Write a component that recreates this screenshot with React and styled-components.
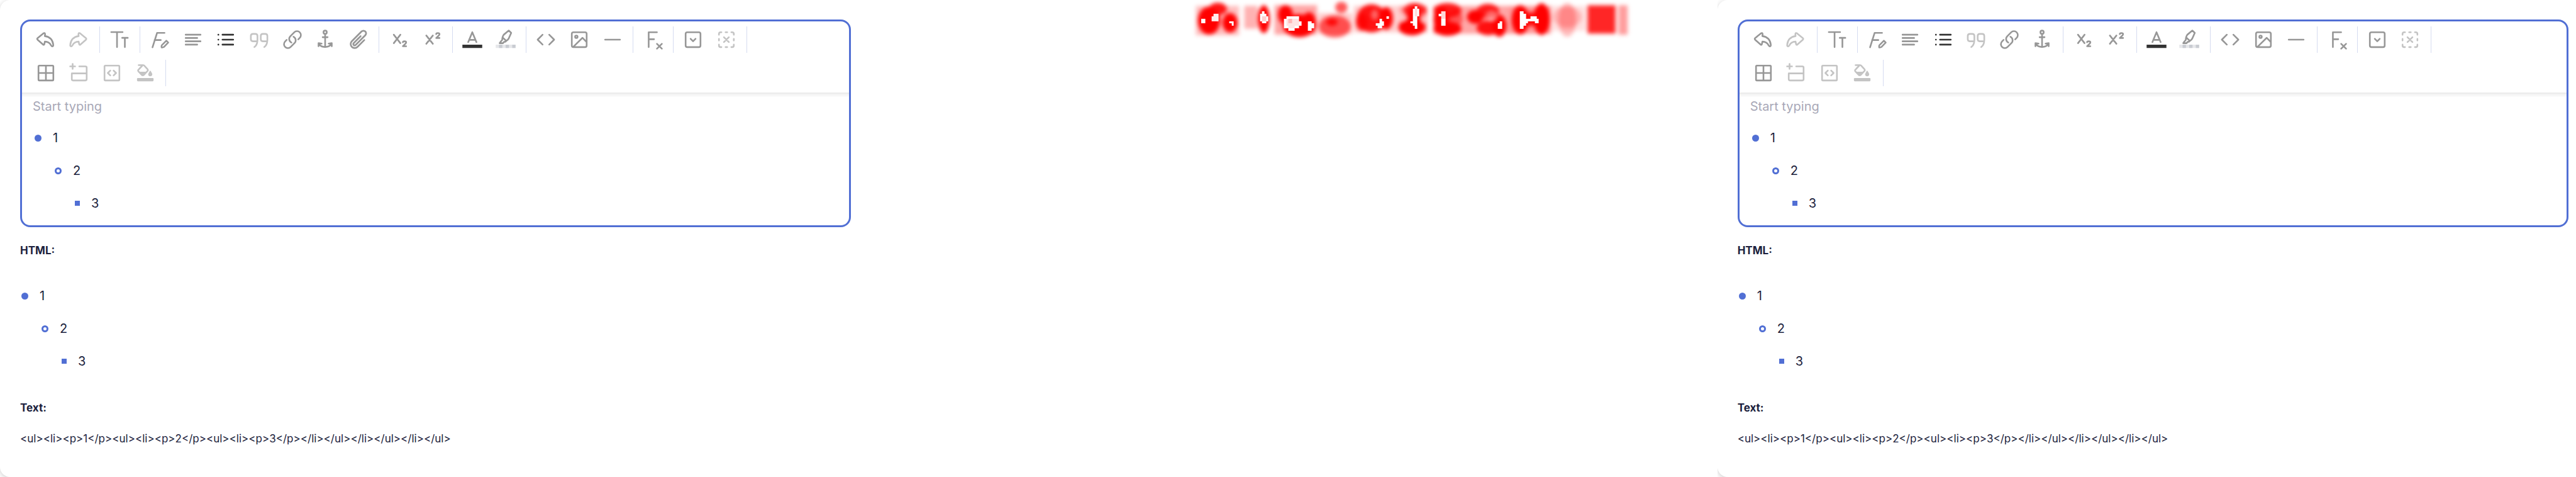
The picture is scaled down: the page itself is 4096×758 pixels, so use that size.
import React from "react";
import styled, { createGlobalStyle, css } from "styled-components";

const GlobalStyle = createGlobalStyle`
  *, *::before, *::after { box-sizing: border-box; }
  body {
    margin: 0;
    background: #fff;
    color: #1b1e3c;
    font-family: Inter, "Open Sans", sans-serif;
  }
`;

const Page = styled.main`
  display: grid;
  grid-template-columns: repeat(3, minmax(0, 1fr));
  min-height: 100vh;
`;

const Frame = styled.section`
  display: flex;
  min-width: 0;
  overflow: hidden;
`;

const Card = styled.div`
  flex: 1;
  min-width: 0;
  padding: 31px 12px 32px 32px;
  background: #fff;
  border-radius: 16px 0 0 16px;
  box-shadow: 0 2px 8px rgba(0, 0, 0, 0.2);
`;

const DiffFrame = styled(Frame)`
  justify-content: flex-end;
  align-items: flex-start;
  padding-right: 128px;
`;

const EditorBox = styled.div`
  border: 3px solid #516fd4;
  border-radius: 16px;
  overflow: hidden;
`;

const Toolbar = styled.div`
  display: flex;
  flex-direction: column;
  gap: 11px;
  padding: 8px 12px 10px;
  box-shadow: 0 2px 0 #ebebeb, 0 3px 4px 2px rgba(0, 0, 0, 0.06);
`;

const ToolRow = styled.div`
  display: flex;
`;

const groupWidths = { 1: 52, 2: 105, 3: 158, 4: 210, 6: 315, 7: 368 };

const ToolGroup = styled.div`
  display: flex;
  width: ${(p) => groupWidths[p.$count]}px;
`;

const Divider = styled.div`
  width: 1px;
  height: 42px;
  margin: 0 5px 0 6px;
  background: #d5dbf0;
`;

const tones = { normal: "#979797", muted: "#c4c4c4", active: "#333333" };

const ToolButton = styled.button`
  display: flex;
  flex: 1 1 0;
  justify-content: center;
  align-items: center;
  min-width: 0;
  height: 42px;
  padding: 0;
  border: 0;
  background: none;
  color: ${(p) => tones[p.$tone]};
`;

const Glyph = styled.svg`
  flex: none;
  width: 42px;
  height: 42px;
  overflow: visible;
  fill: none;
  stroke: currentColor;
  stroke-width: 4;
  stroke-linecap: round;
  stroke-linejoin: round;
`;

const EditArea = styled.div`
  padding: 7px 17px 9px;
  outline: none;
`;

const Placeholder = styled.p`
  margin: 0 0 9px;
  color: #a8a8b7;
  font-size: 20px;
  line-height: 30px;
`;

const List = styled.ul`
  margin: 0;
  padding: 0 0 0 ${(p) => p.$indent}px;
  list-style: none;
`;

const ItemLine = styled.div`
  display: flex;
  align-items: center;
  gap: 18px;
  font-size: 20px;
  line-height: 52px;
`;

const ItemText = styled.p`
  margin: 0;
`;

const markerShapes = {
  disc: css`
    width: 11px;
    height: 11px;
    border-radius: 50%;
    background: #516fd4;
  `,
  circle: css`
    width: 11px;
    height: 11px;
    border: 3px solid #516fd4;
    border-radius: 50%;
  `,
  square: css`
    width: 8px;
    height: 8px;
    background: #516fd4;
  `,
};

const Marker = styled.span`
  flex: none;
  ${(p) => markerShapes[p.$shape]}
`;

const Label = styled.h2`
  margin: ${(p) => p.$before}px 0 ${(p) => p.$after}px;
  font-size: 17px;
  font-weight: 700;
  line-height: 24px;
`;

const Markup = styled.p`
  margin: 0;
  font-size: 17px;
  line-height: 24px;
`;

const DiffDrawing = styled.svg`
  flex: none;
  width: 723px;
  height: 72px;
`;

const undoPath =
  "M-6.5 -15L-20 -3.8Q-22.3 -1.8 -20 0.3L-7 11.8Q-4 13.5 -3.6 10L-2.6 4.8Q8 5 12.3 13.5Q14.5 17 16.3 16.2Q18.2 15.5 17.7 12Q15.5 -6 -2.6 -8.5L-2 -13Q-2.5 -17.8 -6.5 -15Z";

const icons = {
  undo: <path d={undoPath} />,
  redo: <path transform="translate(-4 0) scale(-1 1)" d={undoPath} />,
  size: <path d="M-20 -18.3H7.5M-6 -18.3V18M6.5 -4.3H20M13 -4.3V18" />,
  format: (
    <path d="M-17.5 18.5L-6.5 -16.3H11.5M-12.5 1H2.5M16 2.5L20.5 7L9.8 18Q8.5 19 4.5 18.8Q4 14.5 5 13.5Z" />
  ),
  align: <path d="M-18 -12H18M-18 -4H10M-18 4H18M-18 12H10" />,
  list: <path d="M-18 -12H-17.9M-18 0H-17.9M-18 12H-17.9M-8 -12H18M-8 0H18M-8 12H18" />,
  quote: (
    <path d="M-4 2V-9Q-4 -14 -9 -14H-15Q-20 -14 -20 -9V-1Q-20 4 -15 4H-4.2Q-5 13 -11.5 18M20 2V-9Q20 -14 15 -14H9Q4 -14 4 -9V-1Q4 4 9 4H19.8Q19 13 12.5 18" />
  ),
  link: (
    <path
      transform="scale(2.1) translate(-12 -12)"
      strokeWidth="1.9"
      d="M13.19 8.688a4.5 4.5 0 0 1 1.242 7.244l-4.5 4.5a4.5 4.5 0 0 1-6.364-6.364l1.757-1.757m13.35-.622 1.757-1.757a4.5 4.5 0 0 0-6.364-6.364l-4.5 4.5a4.5 4.5 0 0 0 1.242 7.244"
    />
  ),
  anchor: (
    <path d="M0 -22A4 4 0 1 1 0 -14A4 4 0 1 1 0 -22M0 -13V18M-6 -6H6M-16 16V8.5L-8.5 9.5M16 16V8.5L8.5 9.5M-14.5 10C-10 20.5 10 20.5 14.5 10" />
  ),
  clip: (
    <path
      transform="scale(2.15) translate(-11.8 -12.3)"
      strokeWidth="1.9"
      d="m18.375 12.739-7.693 7.693a4.5 4.5 0 0 1-6.364-6.364l10.94-10.94A3 3 0 1 1 19.5 7.372L8.552 18.32m.009-.01-.01.01m5.699-9.941-7.81 7.81a1.5 1.5 0 0 0 2.112 2.13"
    />
  ),
  subscript: <path d="M-12 -12L4 8.5M4 -12L-12 8.5M10 6.5Q10 4 14 4Q18 4 18 7Q18 9 10 16H18" />,
  superscript: (
    <path d="M-14 -10L2 10M2 -10L-14 10M10 -13.5Q10 -16 14 -16Q18 -16 18 -13Q18 -11 10 -4H18" />
  ),
  color: (
    <>
      <path d="M-10 6L0 -18L10 6M-7 0.5H7" />
      <path d="M-24 12H24V20H-24Z" fill="#333333" stroke="none" />
    </>
  ),
  highlight: (
    <>
      <path d="M7.5 -22L13.5 -16.5L7 -2Q5.5 1 1.5 3L-7.5 -5.5Q-6.5 -10 -4.5 -12ZM-8 -4Q-7.5 1 -10.5 3L-14.5 8.5H-6.5L-4 5.5Q0 5.5 1.5 3" />
      <path d="M-24 12H24V20H-24Z" fill="#e6e7ea" stroke="none" />
      <path d="M-16 12H-8V20H-16ZM0 12H8V20H0ZM16 12H24V20H16Z" fill="#c9ccd2" stroke="none" />
    </>
  ),
  code: <path d="M-8 -12L-20 0L-8 12M8 -12L20 0L8 12" />,
  image: (
    <path d="M-14 -18H14Q18 -18 18 -14V14Q18 18 14 18H-14Q-18 18 -18 14V-14Q-18 -18 -14 -18ZM-10 -7A3 3 0 1 1 -4 -7A3 3 0 1 1 -10 -7M-13.5 16.5L8 -4.5L17.5 5.5" />
  ),
  rule: <path d="M-18 0H18" />,
  clear: <path d="M-10 18V-18H10M-10 -1H3M10 10L22 22M22 10L10 22" />,
  dropdown: (
    <path d="M-14 -18H14Q18 -18 18 -14V14Q18 18 14 18H-14Q-18 18 -18 14V-14Q-18 -18 -14 -18ZM-6 -2L0 4L6 -2" />
  ),
  remove: (
    <path d="M-18 -12V-14Q-18 -18 -14 -18H-12M12 -18H14Q18 -18 18 -14V-12M18 12V14Q18 18 14 18H12M-12 18H-14Q-18 18 -18 14V12M-2 -18H2M-2 18H2M-18 -2V2M18 -2V2M-6 -6L6 6M6 -6L-6 6" />
  ),
  table: (
    <path d="M-16 -18H16Q18 -18 18 -16V16Q18 18 16 18H-16Q-18 18 -18 16V-16Q-18 -18 -16 -18ZM0 -18V18M-18 0H18" />
  ),
  addRow: (
    <path d="M-22 -16H-10M-16 -22V-10M0 -16H15Q18 -16 18 -13V15Q18 18 15 18H-15Q-18 18 -18 15V1H18" />
  ),
  codeCell: (
    <path d="M-16 -18H16Q18 -18 18 -16V16Q18 18 16 18H-16Q-18 18 -18 16V-16Q-18 -18 -16 -18ZM-4 -6L-10 0L-4 6M4 -6L10 0L4 6" />
  ),
  fill: (
    <>
      <path d="M-16 -19H-5Q-3 -19 -2 -17.5L6 -8.5Q7 -7 6 -5.5L-4 5Q-6 6 -8 5L-17 -4.5Q-18 -6 -17 -7.5L-7.5 -17.5" />
      <path d="M-15 -3H4L-5 6.5H-8ZM12 -6Q17.5 1 17 4Q16 8 12 8Q8 8 7 4Q7 1 12 -6Z" fill="currentColor" stroke="none" />
      <path d="M-18 12H18Q20 12 20 14V18Q20 20 18 20H-18Q-20 20 -20 18V14Q-20 12 -18 12Z" fill="currentColor" stroke="none" />
    </>
  ),
};

const tool = (icon, label, tone = "normal") => ({ icon, label, tone });

const firstRow = (withAttachment) => [
  [tool("undo", "Undo"), tool("redo", "Redo", "muted")],
  [tool("size", "Text size")],
  [
    tool("format", "Text format"),
    tool("align", "Alignment"),
    tool("list", "List", "active"),
    tool("quote", "Quote", "muted"),
    tool("link", "Link"),
    tool("anchor", "Anchor"),
    ...(withAttachment ? [tool("clip", "Attach file")] : []),
  ],
  [tool("subscript", "Subscript"), tool("superscript", "Superscript")],
  [tool("color", "Text color"), tool("highlight", "Highlight")],
  [tool("code", "Code"), tool("image", "Image"), tool("rule", "Horizontal rule")],
  [tool("clear", "Clear format")],
  [tool("dropdown", "Expandable block"), tool("remove", "Remove block", "muted")],
];

const secondRow = [
  [
    tool("table", "Table"),
    tool("addRow", "Add row", "muted"),
    tool("codeCell", "Code cell", "muted"),
    tool("fill", "Cell color", "muted"),
  ],
];

const ToolbarRow = ({ groups }) => (
  <ToolRow>
    {groups.map((group) => (
      <React.Fragment key={group[0].icon}>
        <ToolGroup $count={group.length}>
          {group.map(({ icon, label, tone }) => (
            <ToolButton key={icon} type="button" aria-label={label} $tone={tone}>
              <Glyph viewBox="-32 -32 64 64" aria-hidden="true">
                {icons[icon]}
              </Glyph>
            </ToolButton>
          ))}
        </ToolGroup>
        <Divider />
      </React.Fragment>
    ))}
  </ToolRow>
);

const shapes = ["disc", "circle", "square"];

const NestedList = ({ level = 0, indent }) => (
  <List $indent={level === 0 ? indent : 32}>
    <li>
      <ItemLine>
        <Marker $shape={shapes[level]} />
        <ItemText>{level + 1}</ItemText>
      </ItemLine>
      {level < 2 && <NestedList level={level + 1} />}
    </li>
  </List>
);

const markup =
  "<ul><li><p>1</p><ul><li><p>2</p><ul><li><p>3</p></li></ul></li></ul></li></ul>";

const EditorPanel = ({ withAttachment }) => (
  <Frame>
    <Card>
      <EditorBox>
        <Toolbar role="toolbar" aria-label="Formatting">
          <ToolbarRow groups={firstRow(withAttachment)} />
          <ToolbarRow groups={secondRow} />
        </Toolbar>
        <EditArea
          role="textbox"
          aria-label="Editor content"
          aria-multiline="true"
          contentEditable
          suppressContentEditableWarning
        >
          <Placeholder>Start typing</Placeholder>
          <NestedList indent={3} />
        </EditArea>
      </EditorBox>
      <Label $before={25} $after={34}>HTML:</Label>
      <NestedList indent={2} />
      <Label $before={36} $after={25}>Text:</Label>
      <Markup>{markup}</Markup>
    </Card>
  </Frame>
);

// Soft spots of the difference map: cx, cy, rx, ry, opacity
const spots = [
  [175, 140, 76, 95, 1], [235, 60, 62, 42, 0.9], [318, 155, 52, 66, 1],
  [548, 130, 40, 95, 1],
  [695, 100, 50, 65, 1], [790, 175, 112, 78, 1], [855, 155, 48, 72, 1],
  [1030, 180, 110, 75, 0.62], [1010, 150, 40, 26, 0.9], [1075, 50, 42, 38, 0.65],
  [1280, 125, 100, 96, 0.9], [1215, 150, 42, 60, 0.8], [1380, 125, 46, 76, 1],
  [1575, 75, 80, 55, 0.8], [1555, 185, 92, 55, 1], [1570, 130, 45, 95, 1],
  [1797, 70, 95, 50, 0.85], [1797, 195, 95, 48, 1], [1755, 130, 52, 90, 1], [1850, 125, 50, 60, 0.5],
  [1985, 115, 55, 46, 1], [2072, 75, 75, 50, 0.85], [2075, 190, 80, 50, 0.9], [2150, 175, 48, 75, 1],
  [2292, 135, 58, 100, 1], [2437, 130, 56, 108, 1], [2362, 130, 55, 48, 0.9],
  [2612, 135, 60, 115, 0.25], [2612, 115, 100, 70, 0.2],
];

// Even patches of the difference map: x, y, width, height, opacity
const patches = [
  [85, 40, 295, 200, 0.25], [415, 40, 90, 155, 0.3], [620, 35, 290, 200, 0.35],
  [920, 90, 230, 140, 0.2], [1160, 40, 300, 180, 0.2], [1465, 40, 195, 180, 0.35],
  [1700, 40, 200, 190, 0.35], [1900, 40, 310, 190, 0.35], [2210, 40, 290, 190, 0.4],
  [2500, 40, 240, 170, 0.12], [2750, 36, 190, 192, 0.85], [2960, 36, 62, 200, 0.38],
];

const gaps = [
  ["#fff", "M120 126H148V159H120Z"],
  ["#ffeaea", "M207 93H238V144H193V110H207Z"],
  ["#fff", "M314 143H342V176H328V159H314Z"],
  ["#fff", "M535 78H550V93H565V110H579V144H565V159H535V144H521V93H535Z"],
  ["#ffd0d0", "M535 110H565V144H535Z"],
  ["#fff", "M700 110H787V144H803V176H787V192H759V209H714V192H684V126H700Z"],
  ["#ffe4e4", "M700 126H787V176H759V192H714V176H700Z"],
  ["#ffb8b8", "M714 126H742V159H714Z"],
  ["#fff", "M848 143H875V159H889V192H875V209H848Z"],
  ["#fff", "M1335 126H1352V143H1366V176H1352V192H1321V176H1308V159H1335Z"],
  ["#fff", "M1380 110H1397V126H1380Z"],
  ["#fff", "M1574 42H1590V60H1604V110H1590V194H1574V176H1560V159H1546V143H1560V60H1574Z"],
  ["#ffdcdc", "M1574 60H1590V110H1574Z"],
  ["#fff", "M1753 78H1784V176H1753V110H1739V93H1753Z"],
  ["#ffd5d5", "M1753 78H1784V126H1753Z"],
  ["#fff", "M2152 143H2167V194H2139V159H2152Z"],
  ["#fff", "M2288 78H2315V93H2332V126H2360V110H2405V126H2419V159H2392V143H2346V159H2332V176H2315V194H2288Z"],
];

const DifferenceMap = () => (
  <DiffDrawing viewBox="0 0 3080 308" role="img" aria-label="Difference map">
    <defs>
      <filter id="soften" x="-5%" y="-20%" width="110%" height="140%">
        <feGaussianBlur stdDeviation="13" />
      </filter>
    </defs>
    <g fill="#ff0000" filter="url(#soften)">
      {patches.map(([x, y, width, height, opacity]) => (
        <rect key={x} x={x} y={y} width={width} height={height} opacity={opacity} />
      ))}
      {spots.map(([cx, cy, rx, ry, opacity], i) => (
        <ellipse key={i} cx={cx} cy={cy} rx={rx} ry={ry} opacity={opacity} />
      ))}
    </g>
    <g fill="#ffffff" opacity="0.35" filter="url(#soften)">
      <ellipse cx="1302" cy="100" rx="24" ry="34" />
      <ellipse cx="1490" cy="115" rx="30" ry="34" />
      <ellipse cx="1640" cy="120" rx="30" ry="34" />
      <ellipse cx="2097" cy="108" rx="42" ry="36" />
    </g>
    <g shapeRendering="crispEdges">
      {gaps.map(([fill, d]) => (
        <path key={d} d={d} fill={fill} />
      ))}
    </g>
  </DiffDrawing>
);

export default function App() {
  return (
    <>
      <GlobalStyle />
      <Page>
        <EditorPanel withAttachment />
        <DiffFrame>
          <DifferenceMap />
        </DiffFrame>
        <EditorPanel />
      </Page>
    </>
  );
}
